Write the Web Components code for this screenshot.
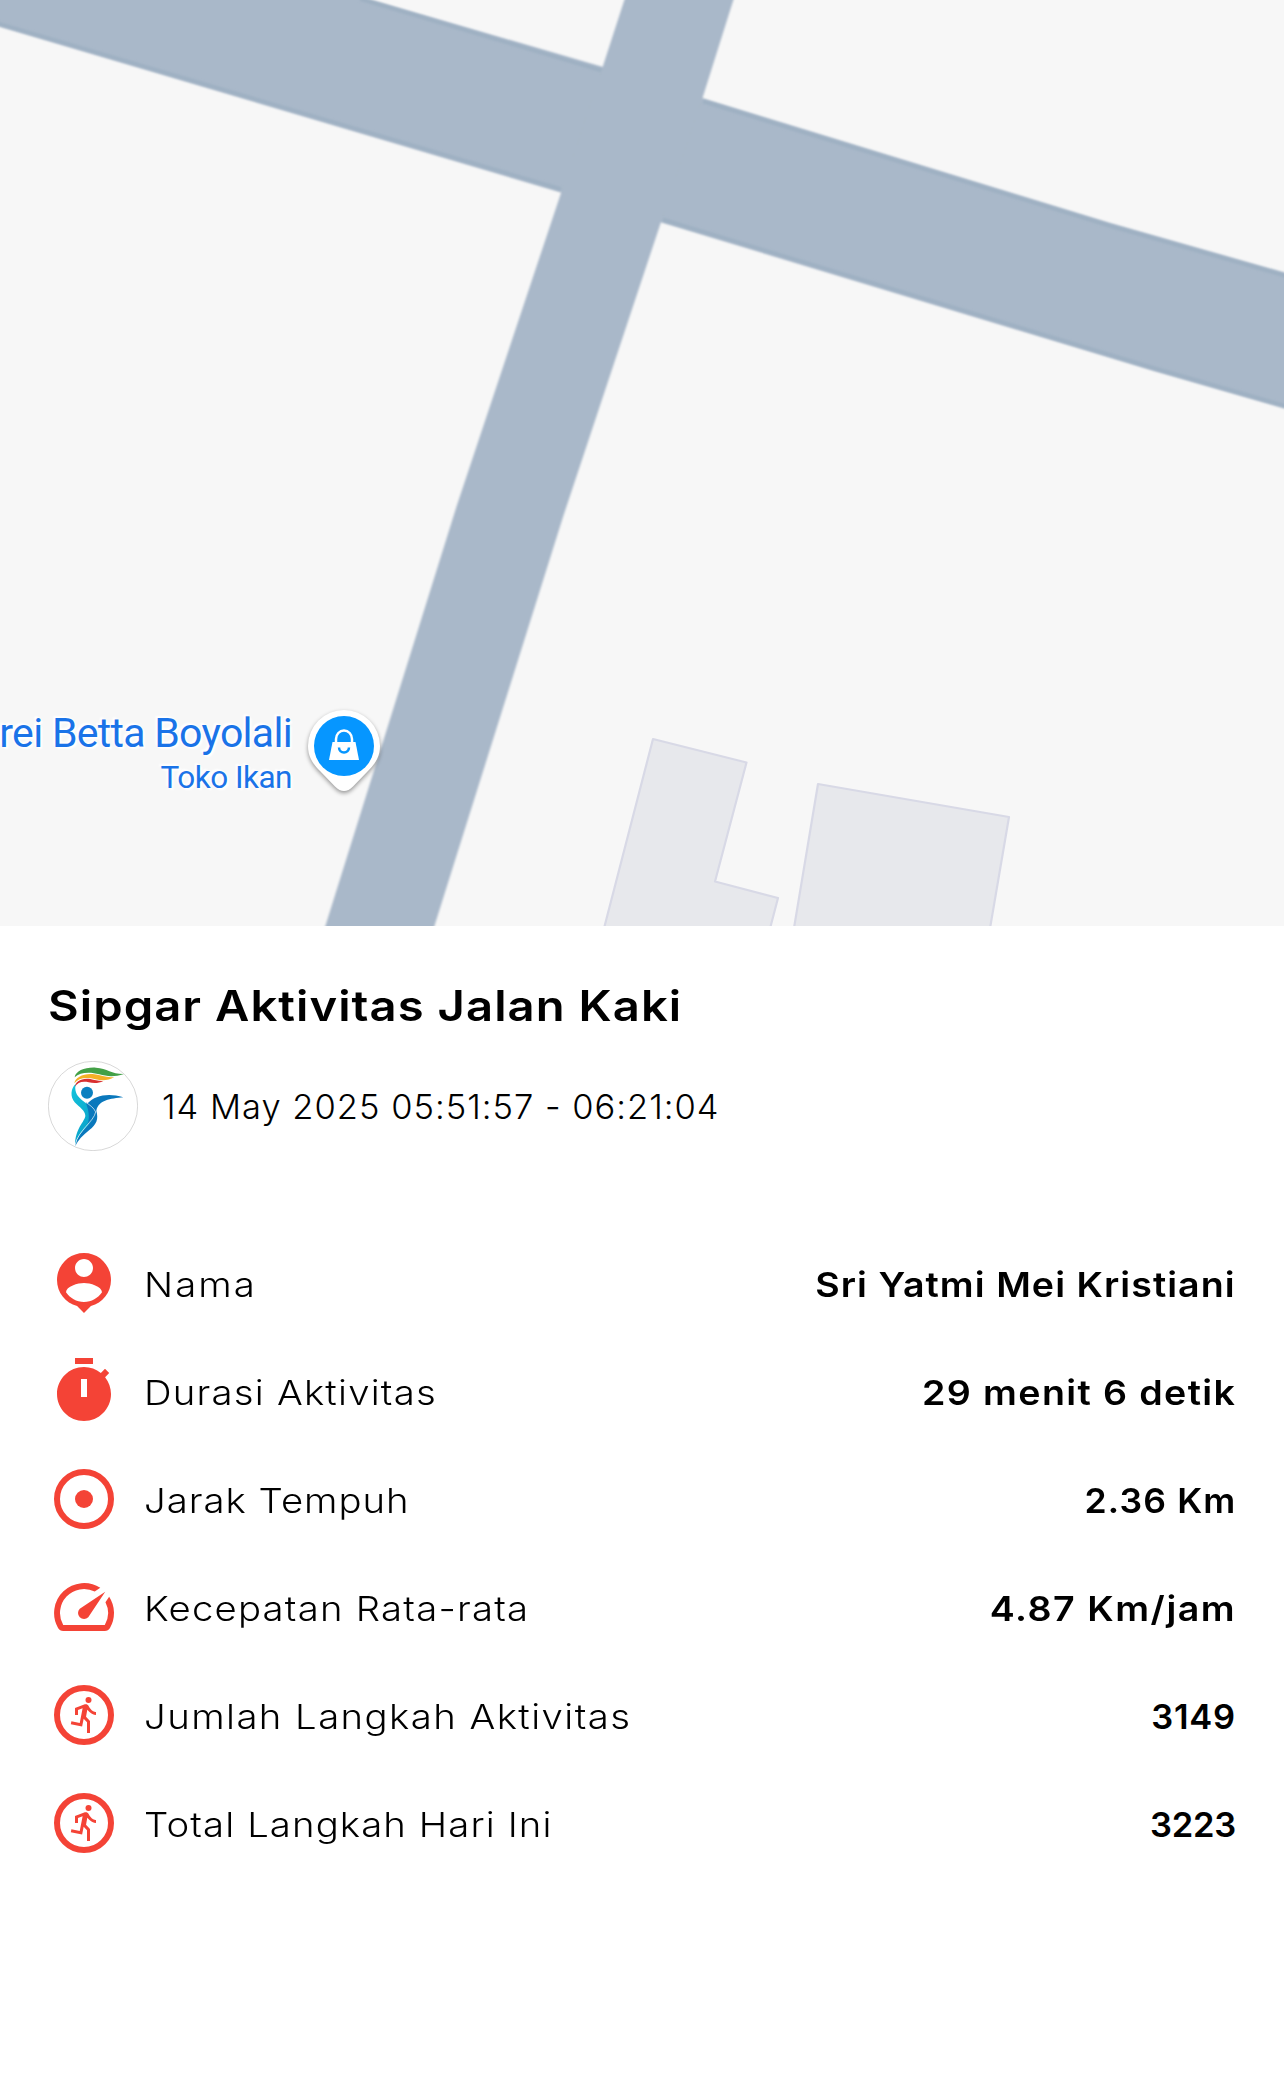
<!DOCTYPE html>
<html lang="id">
<head>
<meta charset="utf-8">
<title>Sipgar Aktivitas Jalan Kaki</title>
<style>
  body {
    margin: 0;
    background: #fff;
    color: #000;
    font-family: Inter, "Open Sans", sans-serif;
  }
</style>
</head>
<body>
<activity-page>
  <activity-map slot="map">
    <map-place>
      <span slot="name">rei Betta Boyolali</span>
      <span slot="kind">Toko Ikan</span>
    </map-place>
  </activity-map>
  <activity-header>
    <span slot="title">Sipgar Aktivitas Jalan Kaki</span>
    <span slot="time">14 May 2025 05:51:57 - 06:21:04</span>
  </activity-header>
  <stat-list>
    <stat-row icon="person"><span style="letter-spacing: 1.9px">Nama</span><span slot="value" style="letter-spacing: .95px">Sri Yatmi Mei Kristiani</span></stat-row>
    <stat-row icon="timer"><span>Durasi Aktivitas</span><span slot="value" style="letter-spacing: 1.25px">29 menit 6 detik</span></stat-row>
    <stat-row icon="adjust" style="--value-stretch: 1.03"><span style="letter-spacing: .9px">Jarak Tempuh</span><span slot="value">2.36 Km</span></stat-row>
    <stat-row icon="speed"><span>Kecepatan Rata-rata</span><span slot="value" style="letter-spacing: 1.4px">4.87 Km/jam</span></stat-row>
    <stat-row icon="run" style="--value-stretch: 1"><span style="letter-spacing: 1.3px">Jumlah Langkah Aktivitas</span><span slot="value" style="letter-spacing: .8px">3149</span></stat-row>
    <stat-row icon="run" style="--value-stretch: 1"><span style="letter-spacing: 1px">Total Langkah Hari Ini</span><span slot="value" style="letter-spacing: -.2px">3223</span></stat-row>
  </stat-list>
</activity-page>

<script>
const ICONS = {
  person: '<path d="M12 2c-4.97 0-9 4.03-9 9 0 4.17 2.84 7.67 6.69 8.69L12 22l2.31-2.31C18.16 18.67 21 15.17 21 11c0-4.97-4.03-9-9-9zm0 2c1.66 0 3 1.34 3 3s-1.34 3-3 3-3-1.34-3-3 1.34-3 3-3zm0 14.3c-2.5 0-4.71-1.28-6-3.22.03-1.99 4-3.08 6-3.08 1.99 0 5.97 1.09 6 3.08-1.29 1.94-3.5 3.22-6 3.22z"/>',
  timer: '<path fill-rule="evenodd" d="M15 1H9v2h6V1zm-4 13h2V8h-2v6zm8.03-6.61L20.4 6.02 19 4.62l-1.38 1.36C16.07 4.74 14.12 4 12 4c-4.97 0-9 4.03-9 9s4.02 9 9 9 9-4.03 9-9c0-2.12-.74-4.07-1.97-5.61z"/>',
  adjust: '<circle cx="12" cy="12" r="9" fill="none" stroke="currentColor" stroke-width="2"/><circle cx="12" cy="12" r="3"/>',
  speed: '<path d="M20.38 8.57l-1.23 1.85a8 8 0 0 1-.22 7.58H5.07A8 8 0 0 1 15.58 6.85l1.85-1.23A10 10 0 0 0 3.35 19a2 2 0 0 0 1.72 1h13.85a2 2 0 0 0 1.74-1 10 10 0 0 0-.27-10.44z"/><path d="M10.59 15.41a2 2 0 0 0 2.83 0l5.66-8.49-8.49 5.66a2 2 0 0 0 0 2.83z"/>',
  run: '<circle cx="12" cy="12" r="9" fill="none" stroke="currentColor" stroke-width="2"/><circle cx="13.5" cy="7" r="1"/><path d="M16 12c-.7 0-2.01-.54-2.91-1.76l-.41 2.35L14 14.03V18h-1v-3.58l-1.11-1.21-.52 2.64-3.77-.77.2-.98 2.78.57.96-4.89-1.54.57V12H9V9.65l3.28-1.21c.49-.18 1.03.06 1.26.53.83 1.7 2.05 2.03 2.46 2.03v1z"/>'
};

class ActivityPage extends HTMLElement {
  constructor() {
    super();
    this.attachShadow({ mode: 'open' }).innerHTML = `
      <style>
        :host {
          display: flex;
          flex-direction: column;
          min-height: 2085px;
        }

        main {
          display: flex;
          flex-direction: column;
          gap: 78px;
          padding: 48px;
        }
      </style>
      <slot name="map"></slot>
      <main><slot></slot></main>
    `;
  }
}

class ActivityMap extends HTMLElement {
  constructor() {
    super();
    this.attachShadow({ mode: 'open' }).innerHTML = `
      <style>
        :host {
          display: block;
          position: relative;
          height: 926px;
          overflow: hidden;
          background: #f7f7f7;
        }

        svg {
          display: block;
        }

        /* places float on the map canvas */
        ::slotted(map-place) {
          position: absolute;
          left: 0;
          top: 708px;
        }
      </style>
      <svg width="1284" height="926" viewBox="0 0 1284 926">
        <defs>
          <filter id="soft" x="-5%" y="-5%" width="110%" height="110%"><feGaussianBlur stdDeviation="0.9"/></filter>
          <filter id="shade" x="-5%" y="-5%" width="110%" height="110%"><feGaussianBlur stdDeviation="1.3"/></filter>
        </defs>
        <g fill="#e7e8ec" stroke="#d8d9e6" stroke-width="2.2" stroke-linejoin="round">
          <path d="M601 940 653 739 746.5 762.5 715 881.5 778 898 767 940z"/>
          <path d="M792 940 818 784 1009 817 988 940z"/>
        </g>
        <g filter="url(#soft)" fill="#a9b8c9">
          <path d="M-20 -113 365 -2 603 67 702 98 1110 223 1300 277V413L1154 371 661.5 222.5 561 192.5 -20 21z"/>
          <path d="M625 -2 602 69 561 193 457 505 321 940H430L563 517 661 222 702.5 98 734 -2z"/>
        </g>
        <g filter="url(#shade)" fill="none" stroke="#9eb0c2" stroke-width="3.5">
          <path d="M360 -1 601.5 70.5M703 101.5 1110 226 1300 280"/>
          <path d="M-20 18 561 189M663 219.5 1154 368 1300 410"/>
        </g>
      </svg>
      <slot></slot>
    `;
  }
}

class MapPlace extends HTMLElement {
  constructor() {
    super();
    this.attachShadow({ mode: 'open' }).innerHTML = `
      <style>
        :host {
          display: flex;
          gap: 10px;
          color: #1a73e8;
          font-family: Roboto, sans-serif;
          text-align: right;
          white-space: nowrap;
        }

        .text {
          display: flex;
          flex-direction: column;
          align-items: flex-end;
          width: 292px;
          text-shadow: 0 0 3px #fff, 0 0 3px #fff, 2px 2px 2px #fff, -2px -2px 2px #fff;
        }

        .name {
          font-size: 41px;
          line-height: 50px;
          letter-spacing: -.7px;
        }

        .kind {
          font-size: 31.5px;
          line-height: 40px;
          letter-spacing: -.5px;
        }

        svg {
          flex: none;
          filter: drop-shadow(0 2px 2px rgba(0, 0, 0, .4));
        }
      </style>
      <div class="text">
        <div class="name"><slot name="name"></slot></div>
        <div class="kind"><slot name="kind"></slot></div>
      </div>
      <svg width="84" height="92" viewBox="0 0 84 92">
        <path fill="#fff" d="M42 2a36 36 0 0 1 36 36c0 11-5 18-12 25L51 78.5q-9 9-18 0L18 63C11 56 6 49 6 38A36 36 0 0 1 42 2z"/>
        <circle cx="42" cy="38" r="30" fill="#0696ff"/>
        <path d="M34 35v-4a8 8.5 0 0 1 16 0v4" fill="none" stroke="#fff" stroke-width="2.5"/>
        <path fill="#fff" d="M30.5 34h23l3.5 18H27z"/>
        <path d="M37 39.5a5 5 0 0 0 10 0" fill="none" stroke="#0696ff" stroke-width="2.5"/>
      </svg>
    `;
  }
}

class ActivityHeader extends HTMLElement {
  constructor() {
    super();
    this.attachShadow({ mode: 'open' }).innerHTML = `
      <style>
        :host {
          display: flex;
          flex-direction: column;
          align-items: flex-start;
          gap: 21px;
          letter-spacing: 1px;
        }

        h1 {
          margin: 0;
          font-size: 42.5px;
          font-weight: 590;
          line-height: 64px;
          padding-bottom: 2px;
          letter-spacing: .95px;
          transform: scaleX(1.11);
          transform-origin: left;
        }

        .meta {
          display: flex;
          align-items: center;
          gap: 24px;
          font-size: 34.5px;
          font-weight: 300;
        }

        svg {
          flex: none;
        }
      </style>
      <h1><slot name="title"></slot></h1>
      <div class="meta">
        <svg width="90" height="90" viewBox="24 33 270 270">
          <defs>
            <linearGradient id="leg" x1="0" y1="0" x2="0.6" y2="1">
              <stop offset="0" stop-color="#12c4dc"/>
              <stop offset="1" stop-color="#0a9fc8"/>
            </linearGradient>
          </defs>
          <circle cx="159" cy="168" r="134" fill="#fff" stroke="#b0b0b0" stroke-width="1.5"/>
          <path fill="#43a047" d="M104 82C107 62 136 51 168 53c34 2 48 20 84 19-28 9-50 8-74 1-30-8-58-6-74 9z"/>
          <path fill="#f5b027" d="M103 100c3-18 28-31 60-27 22 3 37 11 60 8-18 11-36 12-56 7-28-8-51-5-64 12z"/>
          <path fill="#d93030" d="M104 112c1-17 20-29 47-25 13 3 25 7 39 6-15 8-30 7-44 4-20-4-33 0-42 15z"/>
          <circle cx="141" cy="128" r="18" fill="#0a80c0"/>
          <path fill="#0a78bc" d="M143 160C165 136 205 128 250 142C210 146 176 150 169 182C176 208 170 222 148 240C128 256 114 270 106 288C106 262 132 240 148 220C162 204 162 190 152 178z"/>
          <path fill="url(#leg)" d="M107 102C92 115 90 140 104 157C118 172 136 182 136 198C134 215 106 235 105 285C112 255 135 238 150 220C166 202 168 188 160 178C145 162 128 155 117 142C106 130 104 115 107 102z"/>
          <path fill="#0a78bc" d="M137 157C152 163 164 172 168 184C166 200 156 214 142 226C148 210 150 190 137 157z"/>
          <path fill="none" stroke="#fff" stroke-width="2" d="M137 157C150 165 162 174 167 186C162 214 113 243 106 284"/>
        </svg>
        <slot name="time"></slot>
      </div>
    `;
  }
}

class StatList extends HTMLElement {
  constructor() {
    super();
    this.attachShadow({ mode: 'open' }).innerHTML = `
      <style>
        :host {
          display: flex;
          flex-direction: column;
          gap: 36px;
          margin-top: 18px;
        }
      </style>
      <slot></slot>
    `;
  }
}

class StatRow extends HTMLElement {
  constructor() {
    super();
    this.attachShadow({ mode: 'open' });
  }

  connectedCallback() {
    this.shadowRoot.innerHTML = `
      <style>
        :host {
          display: flex;
          align-items: center;
          justify-content: space-between;
          height: 72px;
          font-size: 34.5px;
          font-weight: 300;
          letter-spacing: 1.1px;
          white-space: nowrap;
        }

        .label {
          display: flex;
          align-items: center;
          gap: 24px;
        }

        svg {
          flex: none;
          color: #f44336;
          fill: currentColor;
        }

        .text,
        .value {
          padding-top: 3px;
          transform: scaleX(1.11);
          transform-origin: left;
        }

        .value {
          font-weight: 590;
          transform: scaleX(var(--value-stretch, 1.09));
          transform-origin: right;
        }
      </style>
      <div class="label">
        <svg width="72" height="72" viewBox="0 0 24 24">${ICONS[this.getAttribute('icon')]}</svg>
        <div class="text"><slot></slot></div>
      </div>
      <div class="value"><slot name="value"></slot></div>
    `;
  }
}

customElements.define('activity-page', ActivityPage);
customElements.define('activity-map', ActivityMap);
customElements.define('map-place', MapPlace);
customElements.define('activity-header', ActivityHeader);
customElements.define('stat-list', StatList);
customElements.define('stat-row', StatRow);
</script>
</body>
</html>
